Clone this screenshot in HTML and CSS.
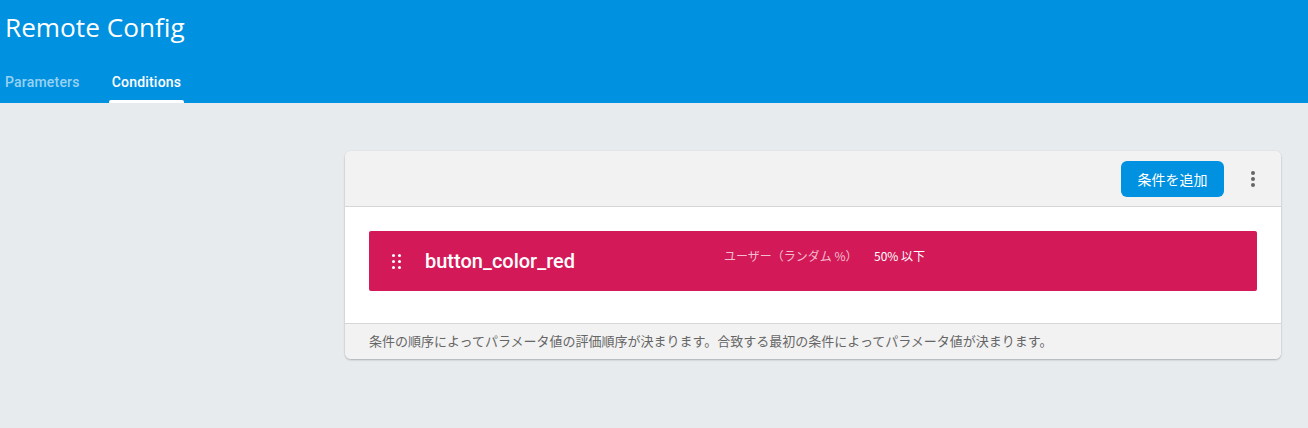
FILE: index.html
```html
<!DOCTYPE html>
<html lang="ja">
<head>
<meta charset="utf-8">
<title>Remote Config</title>
<link rel="stylesheet" href="styles.css">
</head>
<body>
<header class="appbar">
  <h1 class="title">Remote Config</h1>
  <nav class="tabs">
    <a class="tab">Parameters</a>
    <a class="tab active">Conditions</a>
  </nav>
</header>
<main class="content">
  <section class="card">
    <div class="card-head">
      <button class="add-btn">条件を追加</button>
      <span class="kebab"><i></i><i></i><i></i></span>
    </div>
    <div class="card-body">
      <div class="condition">
        <span class="drag"><i></i><i></i><i></i><i></i><i></i><i></i></span>
        <span class="cond-name">button_color_red</span>
        <span class="cond-type">ユーザー（ランダム %）</span>
        <span class="cond-value">50% 以下</span>
      </div>
    </div>
    <div class="card-foot">条件の順序によってパラメータ値の評価順序が決まります。合致する最初の条件によってパラメータ値が決まります。</div>
  </section>
</main>
</body>
</html>
```

FILE: styles.css
```css
* { box-sizing: border-box; }
html, body { margin: 0; padding: 0; }
body {
  background: #e8ebee;
  font-family: Roboto, "Noto Sans CJK JP", sans-serif;
  width: 1308px;
  height: 428px;
  overflow: hidden;
}
.appbar {
  background: #0091e0;
  height: 103px;
  display: flex;
  flex-direction: column;
}
.title {
  margin: 0;
  padding: 10px 0 0 5px;
  height: 62px;
  font-family: "Open Sans", Roboto, sans-serif;
  font-weight: 400;
  font-size: 26.2px;
  line-height: 34px;
  color: #fff;
}
.tabs {
  display: flex;
  height: 41px;
}
.tab {
  font-size: 14px;
  letter-spacing: 0.2px;
  font-weight: 500;
  line-height: 40px;
  color: rgba(255,255,255,0.6);
  padding: 0 5px;
  position: relative;
  margin-right: 24px;
}
.tab.active {
  color: #fff;
  padding: 0 3px;
}
.tab.active::after {
  content: "";
  position: absolute;
  left: 0;
  right: 0;
  bottom: 0;
  height: 3px;
  background: #fff;
  border-radius: 2px 2px 0 0;
}
.content {
  padding: 48px 27px 0 345px;
}
.card {
  width: 936px;
  background: #fff;
  border-radius: 6px;
  box-shadow: 0 1px 2px rgba(0,0,0,0.25), 0 0 1px rgba(0,0,0,0.15);
  overflow: hidden;
}
.card-head {
  height: 56px;
  background: #f2f2f2;
  border-bottom: 1px solid #d6d6d6;
  display: flex;
  align-items: center;
  justify-content: flex-end;
  padding-right: 24px;
}
.add-btn {
  height: 36px;
  width: 103px;
  border: 0;
  border-radius: 6px;
  background: #0091e0;
  color: #fff;
  font-family: "Noto Sans CJK JP", sans-serif;
  font-size: 14px;
  padding: 0;
  margin-top: 1px;
  margin-right: 0;
}
.kebab {
  display: flex;
  flex-direction: column;
  gap: 2px;
  margin-left: 25px;
  width: 8px;
  align-items: center;
}
.kebab i {
  width: 4px;
  height: 4px;
  border-radius: 50%;
  background: #666;
}
.card-body {
  padding: 24px 24px 32px 24px;
}
.condition {
  height: 60px;
  background: #d31957;
  border-radius: 2px;
  display: flex;
  align-items: center;
  padding-left: 23px;
  color: #fff;
}
.drag {
  display: grid;
  grid-template-columns: 3px 3px;
  column-gap: 3px;
  row-gap: 3px;
}
.drag i {
  width: 3px;
  height: 3px;
  border-radius: 50%;
  background: #fff;
}
.cond-name {
  font-size: 20px;
  font-weight: 500;
  margin-left: 24px;
  width: 299px;
}
.cond-type {
  font-family: "Noto Sans CJK JP", sans-serif;
  font-size: 12px;
  color: rgba(255,255,255,0.72);
  width: 150px;
  align-self: flex-start;
  margin-top: 16px;
}
.cond-value {
  font-family: "Noto Sans CJK JP", sans-serif;
  font-size: 12px;
  align-self: flex-start;
  margin-top: 16px;
}
.card-foot {
  height: 36px;
  background: #f2f2f2;
  border-top: 1px solid #d6d6d6;
  padding-left: 24px;
  font-family: "Noto Sans CJK JP", sans-serif;
  font-size: 13px;
  line-height: 33px;
  color: #666;
}
```
